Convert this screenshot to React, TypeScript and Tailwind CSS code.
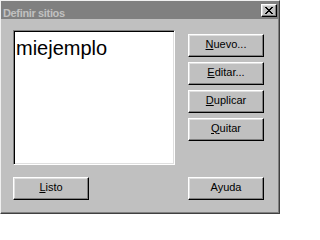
import type { ReactNode } from 'react';

// Win95-style "Definir sitios" dialog, inactive title bar.

const BEVEL_OUT =
  'border border-t-white border-l-white border-b-black border-r-black shadow-[inset_-1px_-1px_0_#808080,inset_1px_1px_0_#dfdfdf]';

function Button({ hot, rest, className }: { hot?: string; rest: string; className?: string }) {
  return (
    <button
      type="button"
      className={`${BEVEL_OUT} flex h-[23px] w-[76px] items-center justify-center bg-[#c0c0c0] pb-[3px] text-[11px] leading-[13px] text-black ${className ?? ''}`}
    >
      {hot && <u className="underline-offset-[1px]">{hot}</u>}
      {rest}
    </button>
  );
}

function Column({ children }: { children: ReactNode }) {
  return <div className="flex flex-col gap-[5px]">{children}</div>;
}

export default function App() {
  return (
    <div className="h-[214px] w-[280px] bg-[#c0c0c0] font-['Liberation_Sans',Arial,sans-serif]">
      <div className="flex h-full flex-col border border-t-[#f0f0f0] border-l-[#f0f0f0] border-b-[#404040] border-r-[#404040] shadow-[inset_-1px_-1px_0_#808080]">
        {/* title bar */}
        <div className="mr-[1px] flex h-[18px] items-start bg-[#808080]">
          <span className="mt-[7px] ml-[2px] text-[11px] leading-[11px] font-bold tracking-[-0.35px] text-[#c0c0c0]">
            Definir sitios
          </span>
          <span
            className={`${BEVEL_OUT} mt-[3px] mr-[1px] ml-auto flex h-[13px] w-[16px] items-center justify-center bg-[#c0c0c0]`}
          >
            <svg width="8" height="7" viewBox="0 0 8 7" aria-hidden>
              <path d="M0 0h2v1h1v1h2V1h1V0h2v1H7v1H6v1H5v1h1v1h1v1h1v1H6V6H5V5H3v1H2v1H0V6h1V5h1V4h1V3H2V2H1V1H0z" fill="#000" />
            </svg>
          </span>
        </div>

        {/* body */}
        <div className="flex flex-1 flex-col pt-[11px] pl-[12px]">
          <div className="flex gap-[13px]">
            <div className="h-[135px] w-[162px] border border-t-[#808080] border-l-[#808080] border-b-white border-r-white bg-white shadow-[inset_1px_1px_0_#000,inset_-1px_-1px_0_#dfdfdf] pt-[7px] pl-[2px]">
              <div className="text-[20px] leading-[20px] text-black">miejemplo</div>
            </div>
            <div className="pt-[4px]">
              <Column>
                <Button hot="N" rest="uevo..." />
                <Button hot="E" rest="ditar..." />
                <Button hot="D" rest="uplicar" />
                <Button hot="Q" rest="uitar" />
              </Column>
            </div>
          </div>
          <div className="mt-[12px] flex gap-[99px]">
            <Button hot="L" rest="isto" />
            <Button rest="Ayuda" />
          </div>
        </div>
      </div>
    </div>
  );
}
